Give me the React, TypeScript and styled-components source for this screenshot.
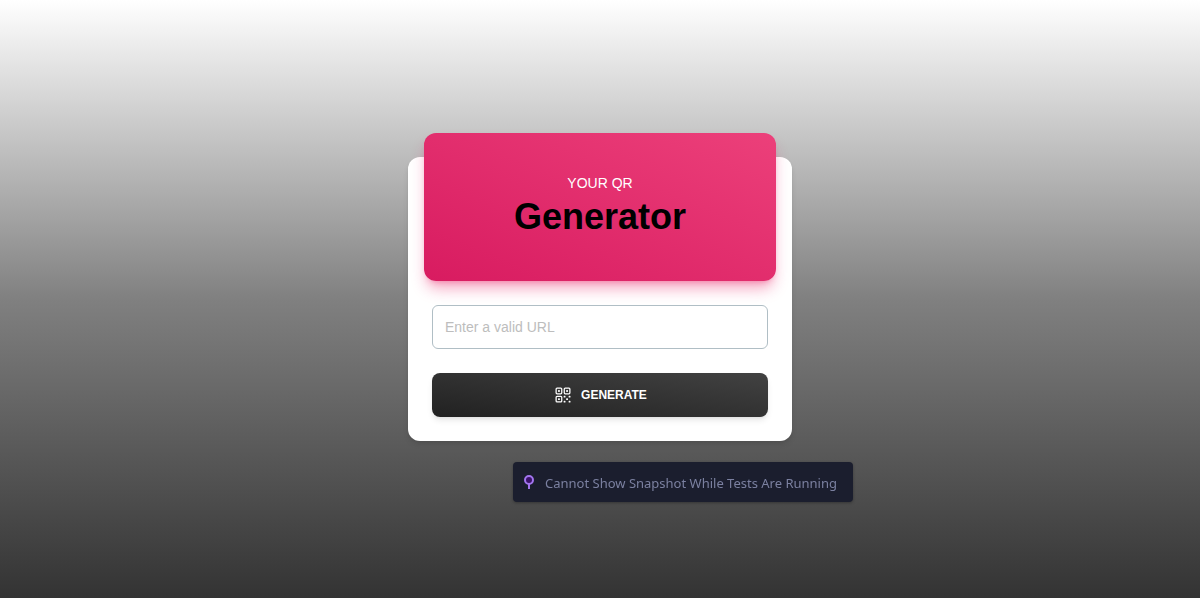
import React, { useState } from "react";
import styled, { createGlobalStyle } from "styled-components";
import { HiOutlineQrCode } from "react-icons/hi2";

const GlobalStyle = createGlobalStyle`
  *, *::before, *::after { box-sizing: border-box; }
  body {
    margin: 0;
    font-family: "Liberation Sans", Arial, sans-serif;
  }
`;

const Page = styled.main`
  min-height: 100vh;
  display: flex;
  align-items: center;
  justify-content: center;
  background: linear-gradient(to bottom, #ffffff, #808080, #333333);
`;

const Card = styled.section`
  width: 100%;
  max-width: 384px;
  display: flex;
  flex-direction: column;
  border-radius: 12px;
  background: #ffffff;
  box-shadow: 0 4px 6px -1px rgba(0, 0, 0, 0.1), 0 2px 4px -2px rgba(0, 0, 0, 0.1);
`;

const CardHeader = styled.header`
  display: flex;
  flex-direction: column;
  align-items: center;
  margin: -24px 16px 0;
  padding: 40px 16px;
  border-radius: 12px;
  background: linear-gradient(to top right, #d81b60, #ec407a);
  box-shadow: 0 10px 15px -3px rgba(233, 30, 99, 0.4), 0 4px 6px -4px rgba(233, 30, 99, 0.4);
`;

const Eyebrow = styled.p`
  margin: 0;
  font-size: 14px;
  line-height: 20px;
  text-transform: uppercase;
  color: #ffffff;
`;

const Title = styled.h1`
  margin: 0;
  font-size: 36px;
  line-height: 48px;
  font-weight: 700;
  color: #000000;
`;

const Form = styled.form`
  display: flex;
  flex-direction: column;
  gap: 24px;
  padding: 24px;
`;

const UrlInput = styled.input`
  width: 100%;
  height: 44px;
  padding: 12px;
  border: 1px solid #b0bec5;
  border-radius: 6px;
  outline: none;
  background: transparent;
  font: 400 14px/20px "Liberation Sans", Arial, sans-serif;
  color: #455a64;

  &::placeholder {
    color: #bdbdbd;
    opacity: 1;
  }
`;

const GenerateButton = styled.button`
  width: 100%;
  height: 44px;
  display: flex;
  align-items: center;
  justify-content: center;
  gap: 8px;
  padding: 12px 24px;
  border: 0;
  border-radius: 8px;
  background: linear-gradient(to top right, #212121, #424242);
  box-shadow: 0 4px 6px -1px rgba(33, 33, 33, 0.1), 0 2px 4px -2px rgba(33, 33, 33, 0.1);
  font: 700 12px/16px "Liberation Sans", Arial, sans-serif;
  text-transform: uppercase;
  color: #ffffff;
  cursor: pointer;
`;

const SnapshotNotice = styled.div`
  position: fixed;
  left: calc(50% - 87px);
  bottom: 96px;
  min-width: 340px;
  height: 40px;
  display: flex;
  align-items: center;
  gap: 8px;
  padding: 2px 12px 0 8px;
  border-radius: 4px;
  background: #1b1e2e;
  box-shadow: 0 1px 3px rgba(0, 0, 0, 0.3);
  font-family: "Noto Sans", "Open Sans", sans-serif;
  font-size: 13px;
  line-height: 20px;
  white-space: nowrap;
  color: #7b80a0;
`;

const PinIcon = () => (
  <svg width="16" height="16" viewBox="0 0 16 16" fill="none" aria-hidden="true">
    <path d="M8 9v5" stroke="#a275ee" strokeWidth="2" strokeLinecap="butt" />
    <circle cx="8" cy="5" r="4" fill="#3b1268" stroke="#a275ee" strokeWidth="2" />
  </svg>
);

export default function App() {
  const [url, setUrl] = useState("");

  return (
    <>
      <GlobalStyle />
      <Page>
        <Card>
          <CardHeader>
            <Eyebrow>Your QR</Eyebrow>
            <Title>Generator</Title>
          </CardHeader>
          <Form onSubmit={(event) => event.preventDefault()}>
            <UrlInput
              type="text"
              aria-label="URL"
              placeholder="Enter a valid URL"
              value={url}
              onChange={(event) => setUrl(event.target.value)}
            />
            <GenerateButton type="submit">
              <HiOutlineQrCode size={20} aria-hidden="true" />
              Generate
            </GenerateButton>
          </Form>
        </Card>
      </Page>
      <SnapshotNotice role="status">
        <PinIcon />
        Cannot Show Snapshot While Tests Are Running
      </SnapshotNotice>
    </>
  );
}
